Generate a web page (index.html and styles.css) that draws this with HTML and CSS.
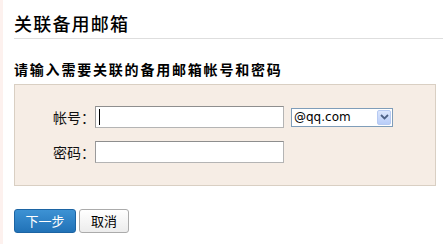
FILE: index.html
```html
<!DOCTYPE html>
<html lang="zh-CN">
<head>
<meta charset="utf-8">
<title>关联备用邮箱</title>
<link rel="stylesheet" href="styles.css">
</head>
<body>
<div class="page">
  <h1 class="title">关联备用邮箱</h1>
  <h2 class="subtitle">请输入需要关联的备用邮箱帐号和密码</h2>
  <div class="panel">
    <div class="row">
      <label class="label" for="acc">帐号：</label>
      <span class="field caret"><input id="acc" class="input" type="text"></span>
      <span class="select">
        <select class="select-el"><option>@qq.com</option></select>
        <span class="arrow"><svg width="9" height="6" viewBox="0 0 9 6"><path d="M1 1 L4.5 4.5 L8 1" fill="none" stroke="#4d6185" stroke-width="1.8"/></svg></span>
      </span>
    </div>
    <div class="row">
      <label class="label" for="pwd">密码：</label>
      <span class="field"><input id="pwd" class="input" type="password"></span>
    </div>
  </div>
  <div class="actions">
    <button class="btn btn-primary" type="button">下一步</button>
    <button class="btn btn-default" type="button">取消</button>
  </div>
</div>
</body>
</html>
```
FILE: styles.css
```css
html, body {
  margin: 0;
  padding: 0;
  background: #fff;
}
body {
  font-family: "Noto Sans CJK SC", "Liberation Sans", sans-serif;
  color: #000;
  width: 443px;
  height: 244px;
  overflow: hidden;
}
.page {
  box-sizing: border-box;
  height: 244px;
  padding-left: 11px;
  border-left: 3px solid #fdf1ee;
}
.title {
  margin: 0;
  padding-top: 10px;
  height: 28px;
  font-size: 18px;
  line-height: 26px;
  font-weight: 500;
  letter-spacing: 1.2px;
  color: #000;
  border-bottom: 1px solid #dedede;
}
.subtitle {
  margin: 0;
  padding-top: 20px;
  height: 25px;
  font-size: 14px;
  line-height: 20px;
  font-weight: bold;
  letter-spacing: 1.8px;
}
.panel {
  box-sizing: border-box;
  width: 422px;
  height: 102px;
  background: #f6ede5;
  border: 1px solid #d9cfc3;
  padding: 21px 0 0 0;
  display: flex;
  flex-direction: column;
  gap: 13px;
}
.row {
  display: flex;
  align-items: center;
  height: 22px;
}
.label {
  width: 80px;
  text-align: right;
  font-size: 14px;
  line-height: 22px;
  color: #111;
}
.field {
  position: relative;
  display: block;
  height: 22px;
}
.input {
  box-sizing: border-box;
  width: 189px;
  height: 22px;
  margin: 0;
  padding: 0 3px;
  background: #fff;
  border: 1px solid #b4b4b4;
  border-top-color: #8e8e8e;
  border-left-color: #9a9a9a;
  border-radius: 0;
  outline: none;
  display: block;
}
.caret::after {
  content: "";
  position: absolute;
  left: 4px;
  top: 3px;
  width: 1px;
  height: 16px;
  background: #000;
}
.select {
  position: relative;
  display: block;
  margin-left: 7px;
  width: 102px;
  height: 19px;
}
.select-el {
  display: block;
  box-sizing: border-box;
  appearance: none;
  -webkit-appearance: none;
  width: 102px;
  height: 19px;
  margin: 0;
  padding: 0 0 0 2px;
  border: 1px solid #7f9db9;
  border-radius: 0;
  background: #fff;
  font-family: "DejaVu Sans", "Liberation Sans", sans-serif;
  font-size: 12px;
  line-height: 17px;
  color: #000;
  outline: none;
}
.arrow {
  position: absolute;
  right: 2px;
  top: 2px;
  width: 14px;
  height: 15px;
  box-sizing: border-box;
  border: 1px solid #b7caf2;
  border-radius: 2px;
  background: linear-gradient(#dbe6fd, #b9cdf8);
  display: flex;
  align-items: center;
  justify-content: center;
}
.actions {
  display: flex;
  gap: 3px;
  margin-top: 23px;
}
.btn {
  box-sizing: border-box;
  height: 24px;
  margin: 0;
  border-radius: 3px;
  font-family: "Noto Sans CJK SC", "Liberation Sans", sans-serif;
  font-size: 13px;
  line-height: 20px;
  padding: 0;
  cursor: pointer;
}
.btn-primary {
  width: 62px;
  color: #fff;
  background: linear-gradient(#3d92d4, #2172b7);
  border: 1px solid #1c64a3;
}
.btn-default {
  width: 50px;
  color: #000;
  background: linear-gradient(#ffffff, #ececec);
  border: 1px solid #ababab;
}
```
